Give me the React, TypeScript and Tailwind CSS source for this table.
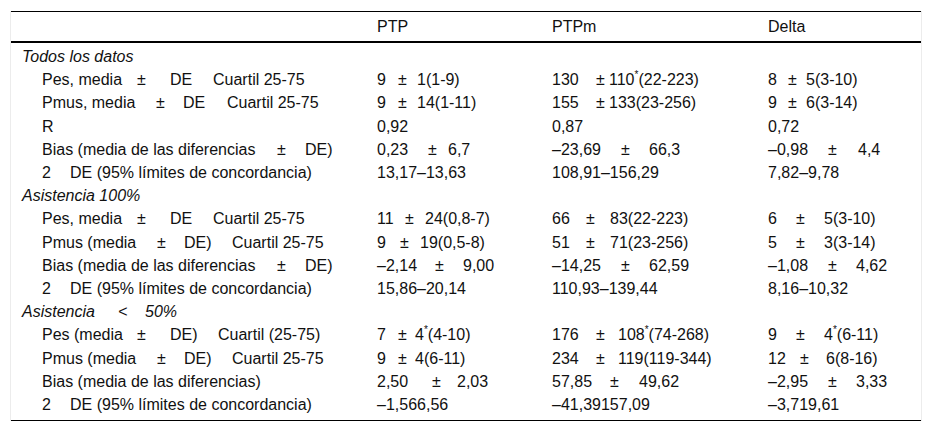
type Tok = [string, string?];
type Row =
  | { section: Tok[] }
  | { label: Tok[]; ptp: Tok[]; ptpm: Tok[]; delta: Tok[] };

const pesA: Tok[] = [["Pes, media", "w-[95px]"], ["±", "w-[33px]"], ["DE", "w-[43px]"], ["Cuartil 25-75"]];
const pmusB: Tok[] = [["Pmus, media", "w-[114px]"], ["±", "w-[27px]"], ["DE", "w-[44px]"], ["Cuartil 25-75"]];
const pmusG: Tok[] = [["Pmus (media", "w-[115px]"], ["±", "w-[27px]"], ["DE)", "w-[48px]"], ["Cuartil 25-75"]];
const bias: Tok[] = [["Bias (media de las diferencias", "w-[235px]"], ["±", "w-[28px]"], ["DE)"]];
const dos: Tok[] = [["2", "w-[28px]"], ["DE (95% límites de concordancia)"]];

const rows: Row[] = [
  { section: [["Todos los datos"]] },
  {
    label: pesA,
    ptp: [["9", "w-[21px]"], ["±", "w-[19px]"], ["1(1-9)"]],
    ptpm: [["130", "w-[44px]"], ["±", "w-[13px]"], ["110^(22-223)"]],
    delta: [["8", "w-[20px]"], ["±", "w-[18px]"], ["5(3-10)"]],
  },
  {
    label: pmusB,
    ptp: [["9", "w-[21px]"], ["±", "w-[19px]"], ["14(1-11)"]],
    ptpm: [["155", "w-[44px]"], ["±", "w-[13px]"], ["133(23-256)"]],
    delta: [["9", "w-[20px]"], ["±", "w-[18px]"], ["6(3-14)"]],
  },
  { label: [["R"]], ptp: [["0,92"]], ptpm: [["0,87"]], delta: [["0,72"]] },
  {
    label: bias,
    ptp: [["0,23", "w-[51px]"], ["±", "w-[20px]"], ["6,7"]],
    ptpm: [["–23,69", "w-[69px]"], ["±", "w-[28px]"], ["66,3"]],
    delta: [["–0,98", "w-[60px]"], ["±", "w-[30px]"], ["4,4"]],
  },
  { label: dos, ptp: [["13,17–13,63"]], ptpm: [["108,91–156,29"]], delta: [["7,82–9,78"]] },
  { section: [["Asistencia 100%"]] },
  {
    label: pesA,
    ptp: [["11", "w-[28px]"], ["±", "w-[20px]"], ["24(0,8-7)"]],
    ptpm: [["66", "w-[34px]"], ["±", "w-[24px]"], ["83(22-223)"]],
    delta: [["6", "w-[28px]"], ["±", "w-[28px]"], ["5(3-10)"]],
  },
  {
    label: pmusG,
    ptp: [["9", "w-[23px]"], ["±", "w-[20px]"], ["19(0,5-8)"]],
    ptpm: [["51", "w-[34px]"], ["±", "w-[24px]"], ["71(23-256)"]],
    delta: [["5", "w-[28px]"], ["±", "w-[28px]"], ["3(3-14)"]],
  },
  {
    label: bias,
    ptp: [["–2,14", "w-[58px]"], ["±", "w-[28px]"], ["9,00"]],
    ptpm: [["–14,25", "w-[69px]"], ["±", "w-[28px]"], ["62,59"]],
    delta: [["–1,08", "w-[60px]"], ["±", "w-[28px]"], ["4,62"]],
  },
  { label: dos, ptp: [["15,86–20,14"]], ptpm: [["110,93–139,44"]], delta: [["8,16–10,32"]] },
  { section: [["Asistencia", "w-[96px]"], ["<", "w-[27px]"], ["50%"]] },
  {
    label: [["Pes (media", "w-[95px]"], ["±", "w-[33px]"], ["DE)", "w-[48px]"], ["Cuartil (25-75)"]],
    ptp: [["7", "w-[21px]"], ["±", "w-[17px]"], ["4^(4-10)"]],
    ptpm: [["176", "w-[44px]"], ["±", "w-[22px]"], ["108^(74-268)"]],
    delta: [["9", "w-[28px]"], ["±", "w-[28px]"], ["4^(6-11)"]],
  },
  {
    label: pmusG,
    ptp: [["9", "w-[21px]"], ["±", "w-[17px]"], ["4(6-11)"]],
    ptpm: [["234", "w-[44px]"], ["±", "w-[22px]"], ["119(119-344)"]],
    delta: [["12", "w-[32px]"], ["±", "w-[26px]"], ["6(8-16)"]],
  },
  {
    label: [["Bias (media de las diferencias)"]],
    ptp: [["2,50", "w-[55px]"], ["±", "w-[25px]"], ["2,03"]],
    ptpm: [["57,85", "w-[58px]"], ["±", "w-[29px]"], ["49,62"]],
    delta: [["–2,95", "w-[60px]"], ["±", "w-[28px]"], ["3,33"]],
  },
  { label: dos, ptp: [["–1,566,56"]], ptpm: [["–41,39157,09"]], delta: [["–3,719,61"]] },
];

function Txt({ s }: { s: string }) {
  const parts = s.split("^");
  return (
    <>
      {parts.map((p, i) => (
        <span key={i}>
          {i > 0 && <sup className="text-[10px] top-[-0.7em]">*</sup>}
          {p}
        </span>
      ))}
    </>
  );
}

function Toks({ toks }: { toks: Tok[] }) {
  return (
    <span className="whitespace-pre">
      {toks.map(([t, w], i) => (
        <span key={i} className={"inline-block " + (w ?? "")}>
          <Txt s={t} />
        </span>
      ))}
    </span>
  );
}

const grid = "grid grid-cols-[355px_175px_216px_1fr]";

export default function App() {
  return (
    <div
      className="bg-white pt-[11px] pl-[10px] w-[932px] h-[434px] text-[#111] text-[16px] leading-[18px]"
      style={{ fontFamily: '"Liberation Sans", Arial, sans-serif' }}
    >
      <div className="w-[912px] border-x border-[#ececec]">
        <div className="border-t border-b border-black pb-[6px]">
          <div className={grid + " h-[31px] items-center border-b-2 border-black pt-[1px]"}>
            <div />
            <div className="pl-[11px]">PTP</div>
            <div className="pl-[11px]">PTPm</div>
            <div className="pl-[11px]">Delta</div>
          </div>
          {rows.map((r, i) =>
            "section" in r ? (
              <div key={i} className="h-[23.2px] flex items-center pl-[11px] pt-[5px] italic">
                <Toks toks={r.section} />
              </div>
            ) : (
              <div key={i} className={grid + " h-[23.2px] items-center pt-[5px]"}>
                <div className="pl-[31px]">
                  <Toks toks={r.label} />
                </div>
                <div className="pl-[11px]">
                  <Toks toks={r.ptp} />
                </div>
                <div className="pl-[11px]">
                  <Toks toks={r.ptpm} />
                </div>
                <div className="pl-[11px]">
                  <Toks toks={r.delta} />
                </div>
              </div>
            )
          )}
        </div>
      </div>
    </div>
  );
}
